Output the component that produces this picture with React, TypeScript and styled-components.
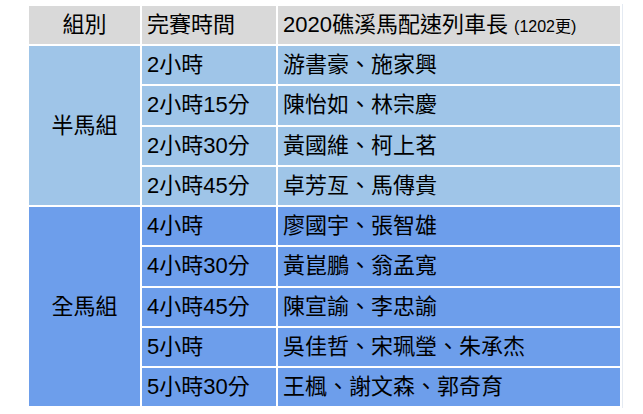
import styled, { createGlobalStyle } from "styled-components";

const GlobalStyle = createGlobalStyle`
  html, body {
    margin: 0;
    padding: 0;
    background: #ffffff;
  }
  body {
    font-family: "Liberation Sans", "Noto Sans CJK TC", sans-serif;
    color: #000;
  }
`;

const Page = styled.div`
  padding: 4px 0 0 27px;
`;

const Table = styled.table`
  border-collapse: separate;
  border-spacing: 2px;
  width: 596px;
  border-right: 1px solid #e4eaf2;
  table-layout: fixed;
  font-size: 22px;
  line-height: 1;
`;

const HeadCell = styled.th`
  background: #d9d9d9;
  height: 38px;
  padding: 0 5px;
  font-weight: normal;
  text-align: left;
  vertical-align: middle;
  &:first-child {
    text-align: center;
  }
`;

const Small = styled.span`
  font-size: 16px;
`;

const Row = styled.tr`
  height: 38.25px;
`;

const Cell = styled.td<{ $tone: "half" | "full"; $center?: boolean }>`
  background: ${(p) => (p.$tone === "half" ? "#9fc5e8" : "#6d9eeb")};
  padding: 0 5px;
  vertical-align: middle;
  text-align: ${(p) => (p.$center ? "center" : "left")};
  white-space: nowrap;
`;

interface IGroup {
  name: string;
  tone: "half" | "full";
  rows: { time: string; pacers: string }[];
}

const groups: IGroup[] = [
  {
    name: "半馬組",
    tone: "half",
    rows: [
      { time: "2小時", pacers: "游書豪、施家興" },
      { time: "2小時15分", pacers: "陳怡如、林宗慶" },
      { time: "2小時30分", pacers: "黃國維、柯上茗" },
      { time: "2小時45分", pacers: "卓芳亙、馬傳貴" },
    ],
  },
  {
    name: "全馬組",
    tone: "full",
    rows: [
      { time: "4小時", pacers: "廖國宇、張智雄" },
      { time: "4小時30分", pacers: "黃崑鵬、翁孟寬" },
      { time: "4小時45分", pacers: "陳宣諭、李忠諭" },
      { time: "5小時", pacers: "吳佳哲、宋珮瑩、朱承杰" },
      { time: "5小時30分", pacers: "王楓、謝文森、郭奇育" },
    ],
  },
];

function App() {
  return (
    <Page>
      <GlobalStyle />
      <Table>
        <colgroup>
          <col style={{ width: 111 }} />
          <col style={{ width: 134 }} />
          <col />
        </colgroup>
        <thead>
          <tr>
            <HeadCell>組別</HeadCell>
            <HeadCell>完賽時間</HeadCell>
            <HeadCell>
              2020礁溪馬配速列車長 <Small>(1202更)</Small>
            </HeadCell>
          </tr>
        </thead>
        <tbody>
          {groups.map((g) =>
            g.rows.map((r, i) => (
              <Row key={g.name + r.time}>
                {i === 0 && (
                  <Cell $tone={g.tone} $center rowSpan={g.rows.length}>
                    {g.name}
                  </Cell>
                )}
                <Cell $tone={g.tone}>{r.time}</Cell>
                <Cell $tone={g.tone}>{r.pacers}</Cell>
              </Row>
            ))
          )}
        </tbody>
      </Table>
    </Page>
  );
}

export default App;
